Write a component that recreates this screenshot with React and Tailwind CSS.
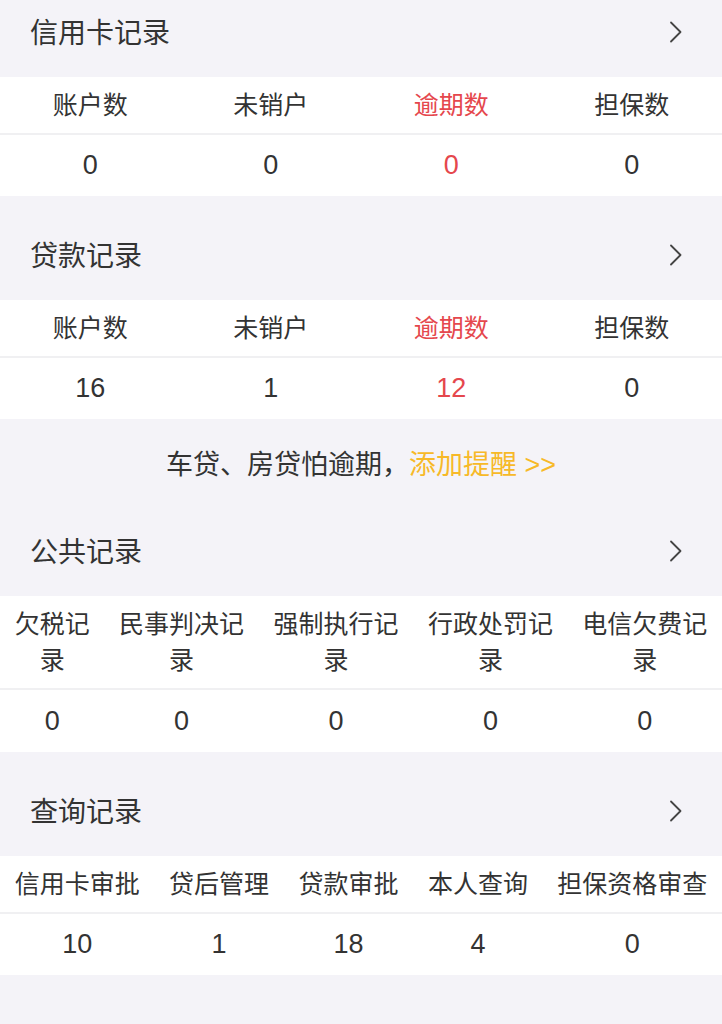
import React from "react";

const font = {
  fontFamily: '"Liberation Sans", "Noto Sans CJK SC", "Noto Sans", sans-serif',
};

const Chevron = () => (
  <svg width="16" height="24" viewBox="0 0 16 24" fill="none" className="text-[#444]">
    <path d="M3 2.5 L12.5 12 L3 21.5" stroke="currentColor" strokeWidth="1.8" strokeLinecap="round" strokeLinejoin="round" />
  </svg>
);

const SectionHeader = ({ title }) => (
  <div className="h-[77px] flex items-center justify-between pl-[30px] pr-[38px] pb-[10px]">
    <h2 className="text-[28px] text-[#333] leading-none">{title}</h2>
    <div className="-mt-[4px]">
      <Chevron />
    </div>
  </div>
);

const FourCols = ({ values }) => {
  const labels = ["账户数", "未销户", "逾期数", "担保数"];
  return (
    <div className="bg-white">
      <div className="grid grid-cols-4 h-[58px] items-center border-b-2 border-[#f0f0f2]">
        {labels.map((l, i) => (
          <div key={l} className={`text-center text-[25px] leading-none ${i === 2 ? "text-[#e5474d]" : "text-[#333]"}`}>
            {l}
          </div>
        ))}
      </div>
      <div className="grid grid-cols-4 h-[61px] items-center">
        {values.map((v, i) => (
          <div key={i} className={`text-center text-[27px] leading-none ${i === 2 ? "text-[#e5474d]" : "text-[#333]"}`}>
            {v}
          </div>
        ))}
      </div>
    </div>
  );
};

const AutoCols = ({ labels, values }) => (
  <div className="bg-white grid grid-cols-[repeat(5,auto)]">
    {labels.map((l, i) => (
      <div key={i} className="px-[14px] text-center text-[25px] leading-[36px] text-[#333] whitespace-nowrap flex flex-col justify-center py-[10px]">
        {l.map((line, j) => (
          <div key={j}>{line}</div>
        ))}
      </div>
    ))}
    <div className="col-span-5 h-[2px] bg-[#f0f0f2]" />
    {values.map((v, i) => (
      <div key={i} className="text-center text-[27px] leading-none text-[#333] h-[62px] flex items-center justify-center">
        {v}
      </div>
    ))}
  </div>
);

export default function App() {
  return (
    <div className="bg-[#f4f3f8] min-h-[1024px] w-full" style={font}>
      <SectionHeader title="信用卡记录" />
      <FourCols values={[0, 0, 0, 0]} />

      <div className="h-[27px]" />
      <SectionHeader title="贷款记录" />
      <FourCols values={[16, 1, 12, 0]} />

      <div className="h-[100px] flex justify-center pt-[28px]">
        <p className="text-[27px] leading-[36px] text-[#333]">
          车贷、房贷怕逾期，<span className="text-[#f7b928]">添加提醒 &gt;&gt;</span>
        </p>
      </div>

      <SectionHeader title="公共记录" />
      <AutoCols
        labels={[
          ["欠税记", "录"],
          ["民事判决记", "录"],
          ["强制执行记", "录"],
          ["行政处罚记", "录"],
          ["电信欠费记", "录"],
        ]}
        values={[0, 0, 0, 0, 0]}
      />

      <div className="h-[27px]" />
      <SectionHeader title="查询记录" />
      <div className="bg-white grid grid-cols-[repeat(5,auto)]">
        {["信用卡审批", "贷后管理", "贷款审批", "本人查询", "担保资格审查"].map((l) => (
          <div key={l} className="px-[14px] h-[56px] flex items-center justify-center text-[25px] leading-none text-[#333] whitespace-nowrap">
            {l}
          </div>
        ))}
        <div className="col-span-5 h-[2px] bg-[#f0f0f2]" />
        {[10, 1, 18, 4, 0].map((v, i) => (
          <div key={i} className="h-[61px] flex items-center justify-center text-[27px] leading-none text-[#333]">
            {v}
          </div>
        ))}
      </div>
    </div>
  );
}
